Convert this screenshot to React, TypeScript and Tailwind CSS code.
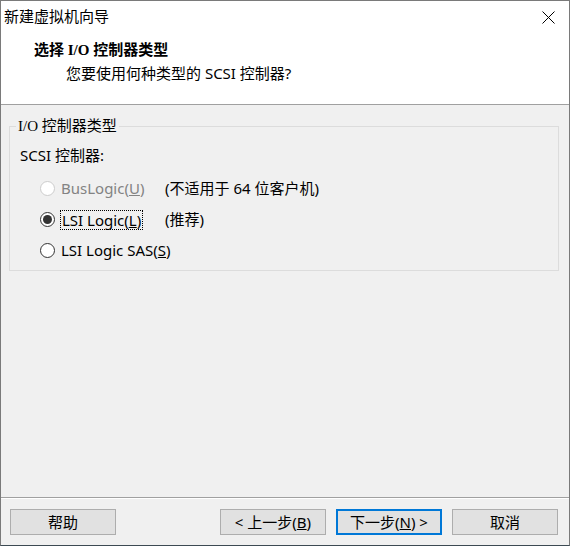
import React from "react";

const SANS = "font-['Segoe_UI','Noto_Sans','Noto_Sans_CJK_SC',sans-serif]";
const SERIF = "font-['Liberation_Serif','Noto_Sans_CJK_SC',serif]";

function Radio({ checked, disabled }: { checked?: boolean; disabled?: boolean }) {
  return (
    <span
      className={`flex h-[15px] w-[15px] shrink-0 items-center justify-center rounded-full border bg-white ${
        disabled ? "border-[#cccccc]" : "border-[#333333]"
      }`}
    >
      {checked && <span className="h-[9px] w-[9px] rounded-full bg-[#333333]" />}
    </span>
  );
}

function Button({ children, primary }: { children: React.ReactNode; primary?: boolean }) {
  return (
    <button
      className={`flex h-[26px] w-[106px] items-center justify-center bg-[#e1e1e1] text-[15px] text-black ${
        primary ? "border-2 border-[#0078d7]" : "border border-[#adadad]"
      }`}
    >
      {children}
    </button>
  );
}

export default function App() {
  return (
    <div
      className={`flex h-[546px] w-[570px] flex-col border-x border-t border-[#7a7a7a] border-b border-b-[#3c4a53] bg-[#f0f0f0] text-black ${SANS}`}
    >
      {/* title bar */}
      <div className="flex h-[31px] items-center justify-between bg-white pl-[3px] pr-[14px]">
        <span className="text-[15px] leading-none">新建虚拟机向导</span>
        <svg width="13" height="13" viewBox="0 0 13 13" className="mt-[1px]">
          <path d="M0.5 0.5 L12.5 12.5 M12.5 0.5 L0.5 12.5" stroke="#000" strokeWidth="1" />
        </svg>
      </div>

      {/* header */}
      <div className="h-[73px] border-b border-[#a0a0a0] bg-white">
        <div className={`pl-[33px] pt-[8px] text-[15px] font-bold leading-[20px] ${SERIF}`}>选择 I/O 控制器类型</div>
        <div className="pl-[65px] pt-[3px] text-[15px] leading-[20px]">您要使用何种类型的 SCSI 控制器?</div>
      </div>

      {/* group box */}
      <div className="relative ml-[8px] mt-[21px] h-[145px] w-[550px] border border-[#dcdcdc]">
        <span className={`absolute left-[6px] top-[-11px] bg-[#f0f0f0] px-[2px] text-[15px] leading-[20px] ${SERIF}`}>
          I/O 控制器类型
        </span>
        <div className="pl-[10px] pt-[18px]">
          <div className="text-[15px] leading-[20px]">SCSI 控制器:</div>
          <div className="mt-[8px] flex flex-col">
            <div className="flex h-[31px] items-center">
              <span className="ml-[20px]"><Radio disabled /></span>
              <span className="ml-[6px] w-[104px] text-[15px] text-[#838383]">
                BusLogic(<span className="underline">U</span>)
              </span>
              <span className="text-[15px]">(不适用于 64 位客户机)</span>
            </div>
            <div className="flex h-[31px] items-center">
              <span className="ml-[20px]"><Radio checked /></span>
              <span className="ml-[5px] w-[105px]">
                <span className="inline-flex h-[20px] items-center border border-dotted border-black px-[1px] text-[15px]">
                  LSI Logic(<span className="underline">L</span>)
                </span>
              </span>
              <span className="text-[15px]">(推荐)</span>
            </div>
            <div className="flex h-[31px] items-center">
              <span className="ml-[20px]"><Radio /></span>
              <span className="ml-[6px] text-[15px]">
                LSI Logic SAS(<span className="underline">S</span>)
              </span>
            </div>
          </div>
        </div>
      </div>

      <div className="flex-1" />

      {/* footer */}
      <div className="h-px bg-[#a0a0a0]" />
      <div className="h-px bg-white" />
      <div className="mb-[10px] mt-[10px] flex items-center pl-[9px] pr-[11px]">
        <Button>帮助</Button>
        <div className="flex-1" />
        <div className="flex gap-[10px]">
          <Button>
            &lt; 上一步(<span className="underline">B</span>)
          </Button>
          <Button primary>
            下一步(<span className="underline">N</span>) &gt;
          </Button>
          <Button>取消</Button>
        </div>
      </div>
    </div>
  );
}
